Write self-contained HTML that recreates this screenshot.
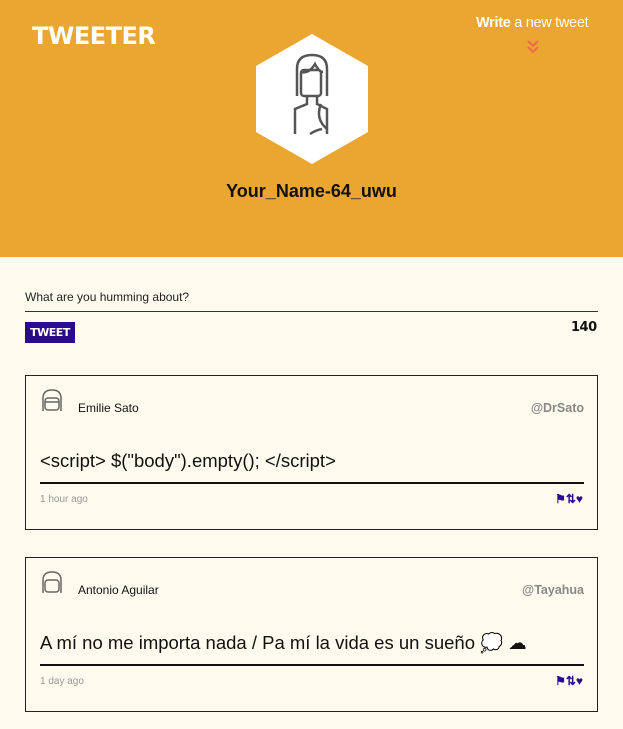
<!DOCTYPE html>
<html><head><meta charset="utf-8"><style>
*{margin:0;padding:0;box-sizing:border-box}
body{width:623px;height:729px;overflow:hidden;background:#fffaee;font-family:"Liberation Sans",sans-serif;position:relative;color:#111}
.hdr{position:absolute;left:0;top:0;width:623px;height:257px;background:#eaa630}
.logo{position:absolute;left:32px;top:22px;color:#fff;font:900 24px "DejaVu Sans",sans-serif;letter-spacing:-0.5px}
.write{position:absolute;left:476px;top:15px;color:#fff;font-size:14.5px;letter-spacing:-0.3px}
.write b{font-weight:bold}
.name{position:absolute;left:0;width:623px;top:181px;text-align:center;font-size:18px;font-weight:bold;color:#111}
.lbl{position:absolute;left:25px;top:290px;font-size:12px;color:#222}
.line{position:absolute;left:25px;top:311px;width:573px;height:1px;background:#333}
.btn{position:absolute;left:25px;top:322px;width:50px;height:21px;background:#2a0b8c;color:#fff;font:900 11px "DejaVu Sans",sans-serif;line-height:21px;text-align:center;letter-spacing:-0.5px}
.cnt{position:absolute;left:571px;top:320px;font:900 13px "DejaVu Sans",sans-serif;letter-spacing:-0.5px}
.tw{position:absolute;left:25px;width:573px;height:155px;border:1px solid #222}
.tw .av{position:absolute;left:14px;top:13px}
.tw .n{position:absolute;left:52px;top:25px;font-size:12px}
.tw .h{position:absolute;right:13px;top:25px;font-size:12.5px;color:#888;font-weight:bold}
.tw .t{position:absolute;left:14px;top:74px;font-size:18.5px}
.tw .ul{position:absolute;left:14px;top:106px;width:544px;height:2px;background:#111}
.tw .ago{position:absolute;left:14px;top:118px;font-size:10px;color:#999}
.tw .ic{position:absolute;right:14px;top:116px;color:#2a0b8c;font-size:12px;font-weight:bold}
</style></head><body>
<div class="hdr">
<div class="logo">TWEETER</div>
<div class="write"><b>Write</b> a new tweet</div>
<svg style="position:absolute;left:527px;top:40px" width="12" height="14" viewBox="0 0 12 14"><path d="M1 1l5 5 5-5M1 7l5 5 5-5" fill="none" stroke="#f26a4b" stroke-width="2"/></svg>
<svg style="position:absolute;left:255px;top:34px" width="114" height="131" viewBox="0 0 114 131"><polygon points="57,0 113,32 113,98 57,130 1,98 1,32" fill="#fff"/>
<g fill="none" stroke="#555" stroke-width="2.5">
<path d="M42 62V35q0-14 15-14t15 14v27"/><path d="M46 38q8 2 14-8 4 8 8 8"/><rect x="46" y="36" width="20" height="26" rx="3"/>
<path d="M52 62v8l-12 5v25M62 62v8l10 5v25"/><path d="M66 70q-6 15 6 25"/><path d="M55 100q6-4 12-5"/></g></svg>
<div class="name">Your_Name-64_uwu</div>
</div>
<div class="lbl">What are you humming about?</div>
<div class="line"></div>
<div class="btn">TWEET</div>
<div class="cnt">140</div>
<div class="tw" style="top:375px">
<svg class="av" width="24" height="26" viewBox="0 0 24 26"><g fill="none" stroke="#666" stroke-width="1.5"><path d="M3 22V9q0-8 9-8t9 8v13"/><rect x="5" y="9" width="14" height="12" rx="3"/><path d="M5 13h14"/></g></svg>
<div class="n">Emilie Sato</div><div class="h">@DrSato</div>
<div class="t">&lt;script&gt; $("body").empty(); &lt;/script&gt;</div>
<div class="ul"></div><div class="ago">1 hour ago</div><div class="ic">⚑⇅♥</div>
</div>
<div class="tw" style="top:557px">
<svg class="av" width="24" height="26" viewBox="0 0 24 26"><g fill="none" stroke="#666" stroke-width="1.5"><path d="M3 22V9q0-8 9-8t9 8v13"/><rect x="5" y="9" width="14" height="12" rx="3"/></g></svg>
<div class="n">Antonio Aguilar</div><div class="h">@Tayahua</div>
<div class="t">A mí no me importa nada / Pa mí la vida es un sueño 💭 ☁</div>
<div class="ul"></div><div class="ago">1 day ago</div><div class="ic">⚑⇅♥</div>
</div>
</body></html>
